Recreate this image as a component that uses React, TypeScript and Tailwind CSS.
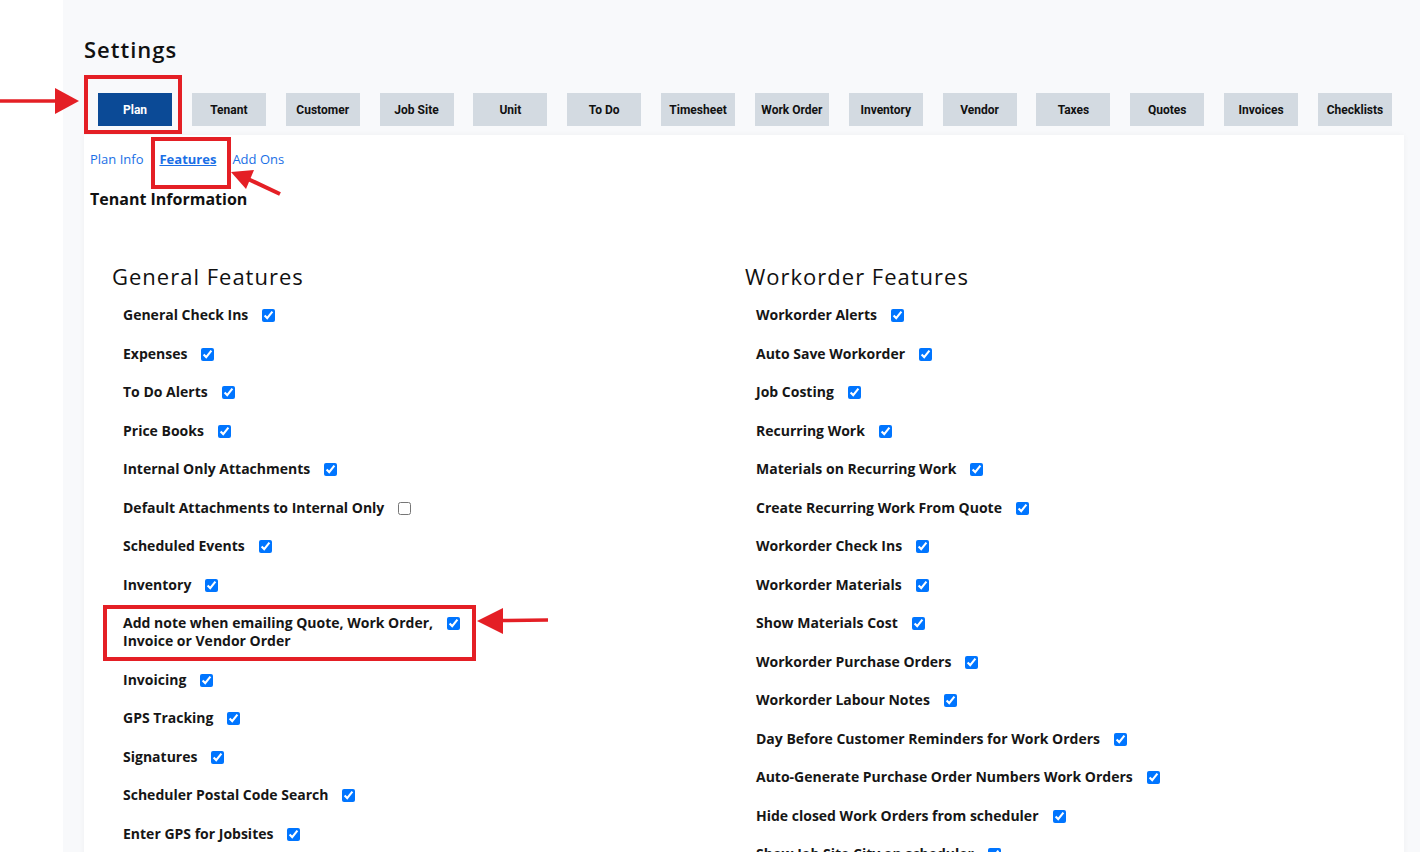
import type { ReactNode } from "react";

const tabs = [
  "Plan",
  "Tenant",
  "Customer",
  "Job Site",
  "Unit",
  "To Do",
  "Timesheet",
  "Work Order",
  "Inventory",
  "Vendor",
  "Taxes",
  "Quotes",
  "Invoices",
  "Checklists",
];

type Feature = { label: ReactNode; checked: boolean };

const general: Feature[] = [
  { label: "General Check Ins", checked: true },
  { label: "Expenses", checked: true },
  { label: "To Do Alerts", checked: true },
  { label: "Price Books", checked: true },
  { label: "Internal Only Attachments", checked: true },
  { label: "Default Attachments to Internal Only", checked: false },
  { label: "Scheduled Events", checked: true },
  { label: "Inventory", checked: true },
  {
    label: (
      <>
        Add note when emailing Quote, Work Order,
        <br />
        Invoice or Vendor Order
      </>
    ),
    checked: true,
  },
  { label: "Invoicing", checked: true },
  { label: "GPS Tracking", checked: true },
  { label: "Signatures", checked: true },
  { label: "Scheduler Postal Code Search", checked: true },
  { label: "Enter GPS for Jobsites", checked: true },
];

const workorder: Feature[] = [
  { label: "Workorder Alerts", checked: true },
  { label: "Auto Save Workorder", checked: true },
  { label: "Job Costing", checked: true },
  { label: "Recurring Work", checked: true },
  { label: "Materials on Recurring Work", checked: true },
  { label: "Create Recurring Work From Quote", checked: true },
  { label: "Workorder Check Ins", checked: true },
  { label: "Workorder Materials", checked: true },
  { label: "Show Materials Cost", checked: true },
  { label: "Workorder Purchase Orders", checked: true },
  { label: "Workorder Labour Notes", checked: true },
  { label: "Day Before Customer Reminders for Work Orders", checked: true },
  { label: "Auto-Generate Purchase Order Numbers Work Orders", checked: true },
  { label: "Hide closed Work Orders from scheduler", checked: true },
  { label: "Show Job Site City on scheduler", checked: true },
];

function FeatureRow({ label, checked }: Feature) {
  return (
    <label className="flex items-start gap-[14px] pl-[11px]">
      <span className="text-[14px] leading-[18px] font-bold text-[#161616]">{label}</span>
      <input type="checkbox" defaultChecked={checked} className="mt-[3px] h-[13px] w-[13px] shrink-0" />
    </label>
  );
}

function FeatureColumn({ title, items }: { title: string; items: Feature[] }) {
  return (
    <section>
      <h2 className="text-[22px] leading-[26px] font-medium tracking-[1px] text-[#111]">{title}</h2>
      <div className="mt-[17px] flex flex-col gap-y-[20.5px]">
        {items.map((f, i) => (
          <FeatureRow key={i} {...f} />
        ))}
      </div>
    </section>
  );
}

// red callouts drawn on top of the page
function Callouts() {
  const red = "#e41f25";
  return (
    <svg className="pointer-events-none absolute left-0 top-0" width="1420" height="852">
      <rect x="86" y="77" width="94" height="55" fill="none" stroke={red} strokeWidth="4" />
      <line x1="0" y1="101" x2="60" y2="101" stroke={red} strokeWidth="3.5" />
      <polygon points="79,101 55,88 55,114" fill={red} />

      <rect x="153" y="139" width="76" height="48" fill="none" stroke={red} strokeWidth="4" />
      <line x1="280" y1="194" x2="248" y2="179" stroke={red} strokeWidth="4" />
      <polygon points="231,172 254,170 246,189" fill={red} />

      <rect x="105" y="607" width="369" height="52" fill="none" stroke={red} strokeWidth="4" />
      <line x1="548" y1="620" x2="500" y2="620.5" stroke={red} strokeWidth="3.5" />
      <polygon points="477,621 503,608 503,634" fill={red} />
    </svg>
  );
}

export default function App() {
  return (
    <div className="relative flex h-[852px] w-[1420px] overflow-hidden bg-white font-['Open_Sans',sans-serif]">
      <aside className="w-[63px] shrink-0 bg-white" />

      <main className="flex-1 bg-[#f8f9fb] pl-[21px]">
        <h1 className="pt-[36px] text-[22px] leading-[26px] font-semibold tracking-[1px] text-[#111]">Settings</h1>

        <div className="mt-[31px] ml-[14px] flex w-[1294px] justify-between">
          {tabs.map((t) => (
            <button
              key={t}
              className={
                t === "Plan"
                  ? "h-[33px] w-[74px] bg-[#0b4a96] font-['Roboto',sans-serif] text-[12px] font-bold text-white"
                  : "h-[33px] w-[74px] bg-[#d3dae1] font-['Roboto',sans-serif] text-[12px] font-bold text-[#111]"
              }
            >
              {t}
            </button>
          ))}
        </div>

        <div className="mt-[9px] min-h-[800px] w-[1320px] bg-white px-[6px] pt-[15px] shadow-[0_0_6px_rgba(0,0,0,0.04)]">
          <nav className="flex gap-[16px] text-[13px] leading-[18px] text-[#1a6fe6]">
            <a>Plan Info</a>
            <a className="font-bold underline">Features</a>
            <a>Add Ons</a>
          </nav>

          <h3 className="mt-[21px] text-[16px] leading-[20px] font-bold text-[#111]">Tenant Information</h3>

          <div className="mt-[54px] ml-[22px] mr-[20px] grid grid-cols-2">
            <FeatureColumn title="General Features" items={general} />
            <FeatureColumn title="Workorder Features" items={workorder} />
          </div>
        </div>
      </main>

      <Callouts />
    </div>
  );
}
